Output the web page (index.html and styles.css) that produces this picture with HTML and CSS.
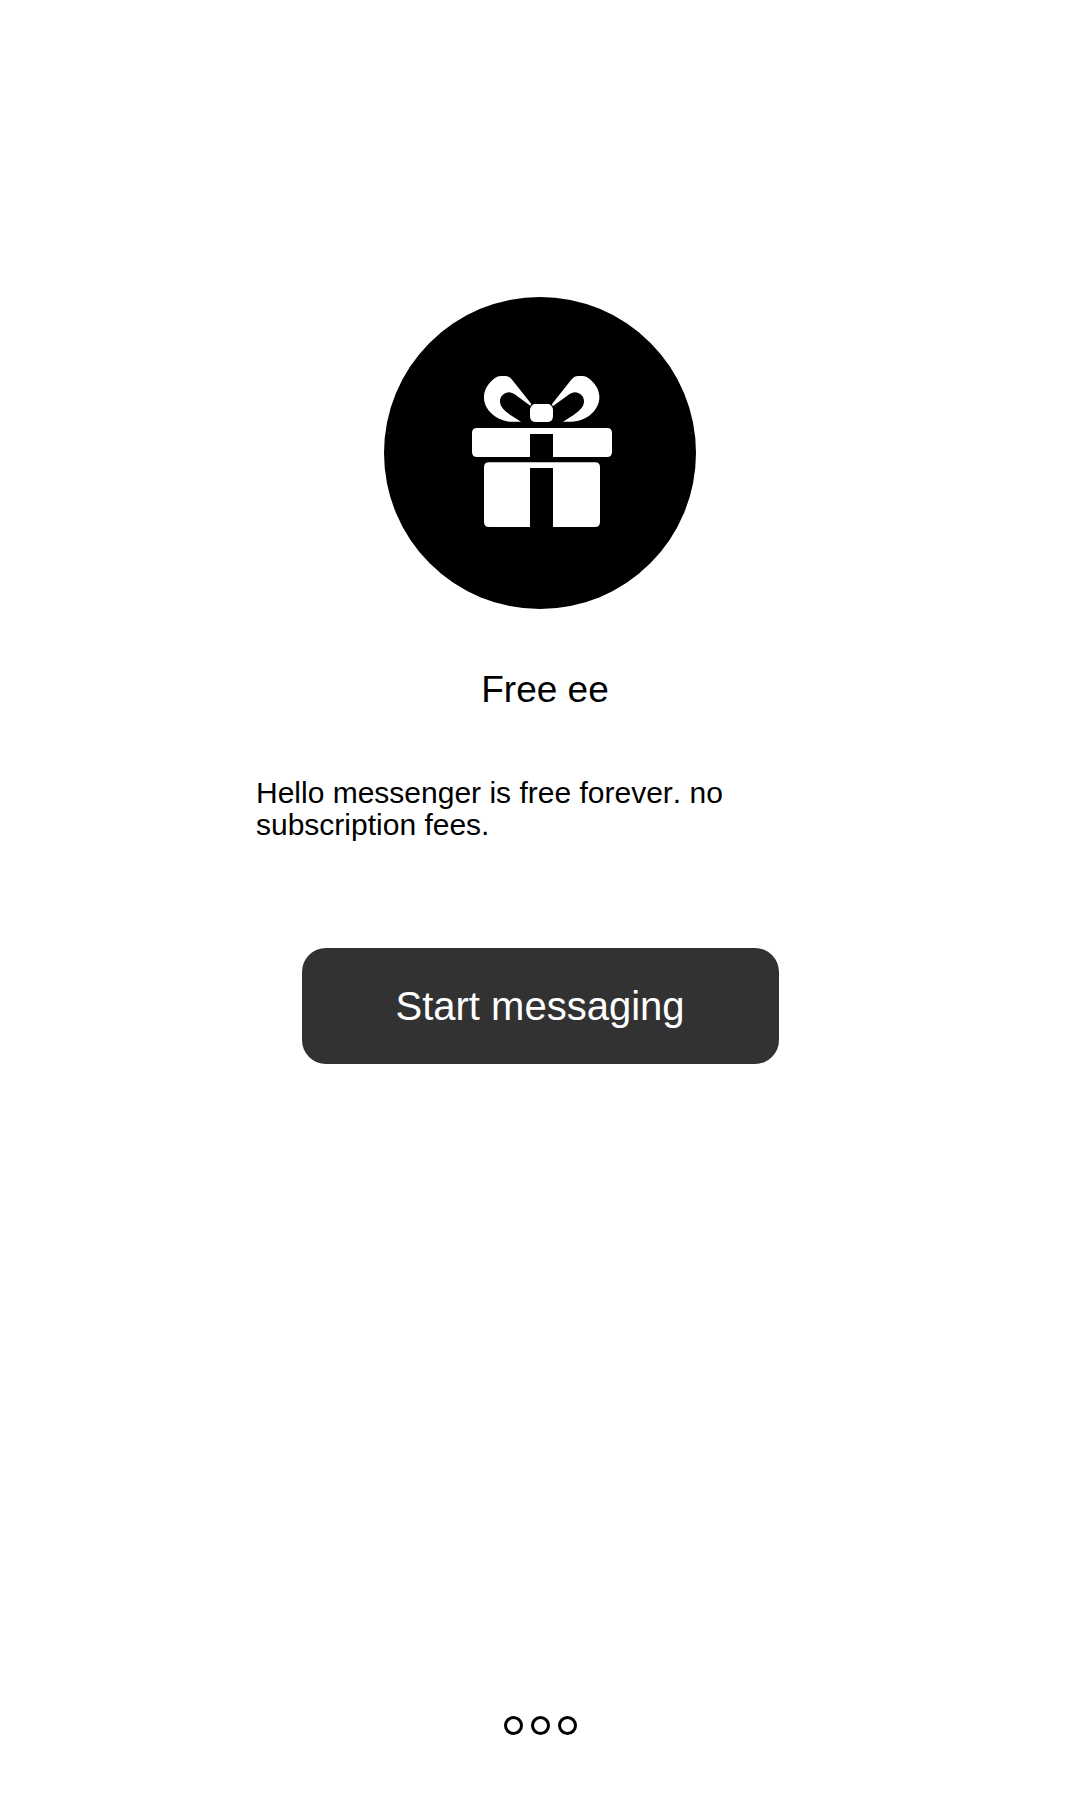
FILE: index.html
```html
<!DOCTYPE html>
<html lang="en">
<head>
  <meta charset="utf-8">
  <meta name="viewport" content="width=device-width, initial-scale=1">
  <title>Hello messenger</title>
  <link rel="stylesheet" href="styles.css">
</head>
<body>
  <div class="screen">
    <main class="intro">
      <svg class="badge" viewBox="0 0 936 936" aria-hidden="true">
        <circle cx="468" cy="468" r="468" fill="#000"/>
        <g transform="translate(228 189)" fill="#fff">
          <!-- bow -->
          <path d="M214 132L155 58Q147 48 137 48H122Q113 48 104 55C86 68 73 88 72 108C70 135 87 157 108 171Q132 185 154 185H183L150 164C136 154 120 142 120 124C120 108 134 97 147 97Q154 97 163 102L211 137Z"/>
          <path d="M276 132L335 58Q343 48 353 48H368Q377 48 386 55C404 68 417 88 418 108C420 135 403 157 382 171Q358 185 336 185H309L342 164C356 154 372 142 372 124C372 108 358 97 345 97Q338 97 329 102L278 139Z"/>
          <path d="M222 132H267Q279 140 279 150V168Q279 186 261 186H228Q210 186 210 168V150Q210 140 222 132Z"/>
          <!-- lid -->
          <path d="M51 204H441Q456 204 456 219V276Q456 291 441 291H279V222H210V291H51Q36 291 36 276V219Q36 204 51 204Z"/>
          <!-- box -->
          <path d="M87 307H405Q420 307 420 322V486Q420 501 405 501H279V324H210V501H87Q72 501 72 486V322Q72 307 87 307Z"/>
        </g>
      </svg>
      <h1 class="title">Free ee</h1>
      <p class="text">Hello messenger is free forever. no subscription fees.</p>
      <button class="start" type="button">Start messaging</button>
    </main>
    <footer class="pager">
      <span class="dot"></span>
      <span class="dot"></span>
      <span class="dot"></span>
    </footer>
  </div>
</body>
</html>
```
FILE: styles.css
```css
* {
  box-sizing: border-box;
}

body {
  margin: 0;
  background: #fff;
  color: #000;
  font-family: "Liberation Sans", Arial, sans-serif;
  font-kerning: none;
}

.screen {
  display: flex;
  flex-direction: column;
  justify-content: space-between;
  min-height: 100vh;
  padding: 297px 24px 65px;
}

.intro {
  display: flex;
  flex-direction: column;
  align-items: center;
}

.badge {
  width: 312px;
  height: 312px;
}

.title {
  margin: 60px 0 0;
  padding-left: 10px;
  font-size: 37px;
  font-weight: 400;
  line-height: 42px;
}

.text {
  width: 100%;
  max-width: 568px;
  margin: 66px 0 0;
  font-size: 30px;
  line-height: 32px;
}

.start {
  width: 100%;
  max-width: 477px;
  height: 116px;
  margin-top: 107px;
  padding: 0;
  border: 0;
  border-radius: 24px;
  background: #323232;
  color: #fff;
  font-family: inherit;
  font-size: 40px;
}

.pager {
  display: flex;
  justify-content: center;
  gap: 8px;
}

.dot {
  width: 19px;
  height: 19px;
  border: 3px solid #000;
  border-radius: 50%;
}
```
